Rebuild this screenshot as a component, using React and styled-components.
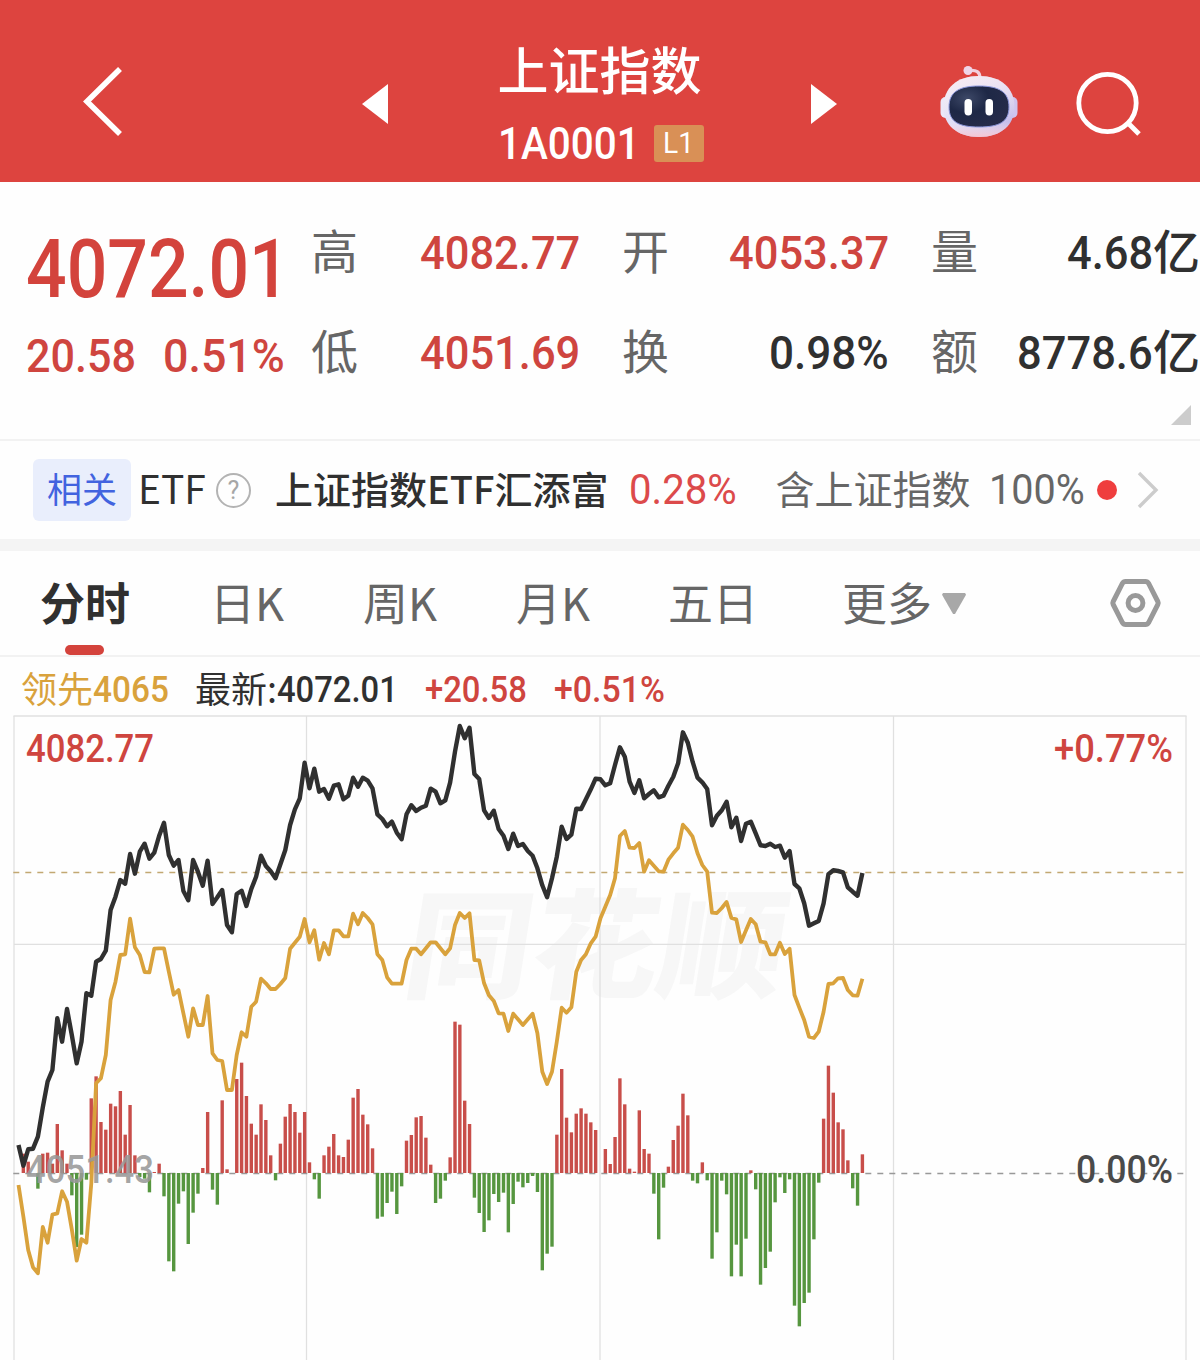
import React, { useLayoutEffect, useRef, useState } from 'react';
import styled, { createGlobalStyle } from 'styled-components';

const RED = '#cf453f';
const INK = '#303030';
const GREY = '#666666';
const GOLD = '#d9a23c';

const GlobalStyle = createGlobalStyle`
  body {
    margin: 0;
    background: #fefefe;
    overflow: hidden;
  }
  * {
    box-sizing: border-box;
  }
`;

const Page = styled.div`
  width: 1200px;
  height: 1360px;
  overflow: hidden;
  display: flex;
  flex-direction: column;
  font-family: 'Noto Sans CJK SC', sans-serif;
  color: ${INK};
`;

const Zh = styled.span`
  font-size: ${(props) => props.$size}px;
  font-weight: ${(props) => props.$weight || 400};
  color: ${(props) => props.$color || 'inherit'};
  line-height: 1;
  white-space: nowrap;
  padding-bottom: ${(props) => props.$lift || 0}px;
`;

const NumBox = styled.span`
  display: inline-block;
  flex: none;
  width: ${(props) => props.$width}px;
  font-family: Roboto, sans-serif;
  font-size: ${(props) => props.$size}px;
  font-weight: ${(props) => props.$weight || 500};
  color: ${(props) => props.$color || 'inherit'};
  line-height: 1;
  white-space: nowrap;
`;

const NumInner = styled.span`
  display: inline-block;
  transform-origin: left center;
`;

// condensed figures: squeezes the text to the given width
const Num = ({ width, size, weight, color, children }) => {
  const ref = useRef(null);
  const [scale, setScale] = useState(1);
  useLayoutEffect(() => {
    setScale(width / ref.current.offsetWidth);
  }, [width, children]);
  return (
    <NumBox $width={width} $size={size} $weight={weight} $color={color}>
      <NumInner ref={ref} style={{ transform: `scaleX(${scale})` }}>{children}</NumInner>
    </NumBox>
  );
};

/* ---------- header ---------- */

const Header = styled.header`
  height: 182px;
  flex: none;
  display: grid;
  grid-template-columns: 362px 475px 103px 78px 58px 1fr;
  background: #dd443f;
  color: #fff;
`;

const BackCell = styled.div`
  padding: 66px 0 0 82px;
`;

const TitleCell = styled.div`
  display: flex;
  justify-content: space-between;
`;

const Arrow = styled.div`
  width: 26px;
  height: 40px;
  margin-top: 84px;
  background: #fff;
  clip-path: ${(props) =>
    props.$left ? 'polygon(100% 0, 100% 100%, 0 50%)' : 'polygon(0 0, 100% 50%, 0 100%)'};
`;

const TitleText = styled.div`
  padding: 43px 0 0 2px;
`;

const CodeRow = styled.div`
  display: flex;
  align-items: center;
  gap: 14px;
  height: 46px;
  margin-top: 26px;
`;

const Badge = styled.span`
  display: flex;
  align-items: center;
  justify-content: center;
  width: 50px;
  height: 37px;
  border-radius: 3px;
  background: #d99056;
`;

const IconCell = styled.div`
  padding-top: ${(props) => props.$top}px;
  svg {
    display: block;
  }
`;

const Robot = () => (
  <svg width="78" height="74" viewBox="0 0 78 74">
    <defs>
      <linearGradient id="shell" x1="0" y1="0" x2="1" y2="1">
        <stop offset="0" stopColor="#f4f2fb" />
        <stop offset="0.5" stopColor="#dcdcf6" />
        <stop offset="1" stopColor="#b9aee6" />
      </linearGradient>
      <linearGradient id="rim" x1="0" y1="0" x2="0" y2="1">
        <stop offset="0" stopColor="#fbe9ee" stopOpacity="0.6" />
        <stop offset="0.75" stopColor="#fbe9ee" stopOpacity="0" />
        <stop offset="1" stopColor="#f6c5d2" />
      </linearGradient>
      <radialGradient id="face" cx="0.3" cy="0.3" r="0.8">
        <stop offset="0" stopColor="#3d4867" />
        <stop offset="0.45" stopColor="#1e2846" />
        <stop offset="1" stopColor="#272c4a" />
      </radialGradient>
    </defs>
    <path d="M29 5.5 Q40 4 40 13" fill="none" stroke="#f3cfdd" strokeWidth="3.2" />
    <circle cx="28" cy="5.5" r="4.5" fill="#efd5e8" />
    <rect x="0.5" y="32" width="12" height="21" rx="5" fill="#ece8f8" />
    <rect x="65.5" y="32" width="12" height="21" rx="5" fill="#cfc4ee" />
    <path d="M39 11 C61 11 74.5 23 74.5 42 C74.5 60 61 72 39 72 C17 72 3.5 60 3.5 42 C3.5 23 17 11 39 11Z" fill="url(#shell)" />
    <path d="M39 11 C61 11 74.5 23 74.5 42 C74.5 60 61 72 39 72 C17 72 3.5 60 3.5 42 C3.5 23 17 11 39 11Z" fill="url(#rim)" />
    <path
      d="M39 21 C59 21 69 27 69 42 C69 57 59 62 39 62 C19 62 9 57 9 42 C9 27 19 21 39 21Z"
      fill="url(#face)"
      stroke="#8d98dc"
      strokeWidth="1"
    />
    <rect x="24.5" y="34" width="7.5" height="16.5" rx="3.7" fill="#fff" />
    <rect x="45.5" y="34" width="7.5" height="16.5" rx="3.7" fill="#fff" />
  </svg>
);

const TopBar = () => (
  <Header>
    <BackCell>
      <svg width="42" height="72" viewBox="0 0 42 72">
        <path d="M38 3 L5 35.5 L38 68" fill="none" stroke="#fff" strokeWidth="5.6" />
      </svg>
    </BackCell>
    <TitleCell>
      <Arrow $left />
      <TitleText>
        <Zh as="div" $size={51} $weight={500}>上证指数</Zh>
        <CodeRow>
          <Num width={142} size={45}>1A0001</Num>
          <Badge>
            <Num width={31} size={30} weight={400}>L1</Num>
          </Badge>
        </CodeRow>
      </TitleText>
      <Arrow />
    </TitleCell>
    <span />
    <IconCell $top={65}>
      <Robot />
    </IconCell>
    <span />
    <IconCell $top={70}>
      <svg width="70" height="68" viewBox="0 0 70 68">
        <circle cx="31.5" cy="33" r="28.7" fill="none" stroke="#fff" strokeWidth="4.8" />
        <path d="M52 53 L63 64" stroke="#fff" strokeWidth="5" />
      </svg>
    </IconCell>
  </Header>
);

/* ---------- quote ---------- */

const QuotePanel = styled.section`
  height: 259px;
  flex: none;
  display: grid;
  grid-template-columns: 243px 269px 267px 269px;
  column-gap: 42px;
  grid-template-rows: 201px 1fr;
  padding: 20px 0 0 26px;
  border-bottom: 2px solid #f2f2f2;
`;

const PriceCol = styled.div`
  width: 259px;
`;

const BigPrice = styled.div`
  height: 134px;
  display: flex;
  align-items: center;
`;

const ChangeRow = styled.div`
  display: flex;
  justify-content: space-between;
  align-items: center;
  height: 38px;
`;

const StatCol = styled.div`
  display: grid;
  grid-template-rows: 100px 100px;
`;

const Stat = styled.div`
  display: flex;
  justify-content: space-between;
  align-items: center;
`;

const StatValue = styled.div`
  display: flex;
  align-items: center;
`;

const Corner = styled.div`
  grid-column: 4;
  justify-self: end;
  width: 20px;
  height: 20px;
  margin: 2px 9px 0 0;
  background: #cccccc;
  clip-path: polygon(100% 0, 100% 100%, 0 100%);
`;

const stats = [
  [
    { label: '高', value: '4082.77', width: 160, color: RED },
    { label: '低', value: '4051.69', width: 160, color: RED },
  ],
  [
    { label: '开', value: '4053.37', width: 160, color: RED },
    { label: '换', value: '0.98%', width: 120 },
  ],
  [
    { label: '量', value: '4.68', width: 86, unit: '亿' },
    { label: '额', value: '8778.6', width: 136, unit: '亿' },
  ],
];

const Quote = () => (
  <QuotePanel>
    <PriceCol>
      <BigPrice>
        <Num width={264} size={81} color="#d3433c">4072.01</Num>
      </BigPrice>
      <ChangeRow>
        <Num width={110} size={47} color={RED}>20.58</Num>
        <Num width={122} size={47} color={RED}>0.51%</Num>
      </ChangeRow>
    </PriceCol>
    {stats.map((col, i) => (
      <StatCol key={i}>
        {col.map((s) => (
          <Stat key={s.label}>
            <Zh $size={47} $lift={8} $color={GREY}>{s.label}</Zh>
            <StatValue>
              <Num width={s.width} size={47} color={s.color}>{s.value}</Num>
              {s.unit && <Zh $size={47} $lift={8} $weight={500}>{s.unit}</Zh>}
            </StatValue>
          </Stat>
        ))}
      </StatCol>
    ))}
    <Corner />
  </QuotePanel>
);

/* ---------- related etf ---------- */

const EtfRow = styled.section`
  height: 98px;
  flex: none;
  display: flex;
  align-items: center;
  padding-left: 33px;
`;

const Tag = styled.span`
  display: flex;
  align-items: center;
  justify-content: center;
  width: 98px;
  height: 62px;
  border-radius: 6px;
  background: #e9eefc;
  margin-right: 7px;
`;

const Help = styled.span`
  display: flex;
  align-items: center;
  justify-content: center;
  width: 35px;
  height: 35px;
  border: 2px solid #b3b3b3;
  border-radius: 50%;
  margin: 0 24px 0 10px;
  font: 400 25px Roboto, sans-serif;
  color: #a6a6a6;
`;

const Gap = styled.span`
  width: ${(props) => props.$w}px;
`;

const Dot = styled.span`
  width: 20px;
  height: 20px;
  border-radius: 50%;
  background: #ef3e3e;
  margin: 0 20px 0 12px;
`;

const Related = () => (
  <EtfRow>
    <Tag>
      <Zh $size={35} $lift={5} $color="#4263df">相关</Zh>
    </Tag>
    <Zh $size={39} $lift={5}>ETF</Zh>
    <Help>?</Help>
    <Zh $size={38} $lift={5} $weight={500}>上证指数ETF汇添富</Zh>
    <Gap $w={21} />
    <Num width={108} size={42} weight={400} color="#dc4a4b">0.28%</Num>
    <Gap $w={38} />
    <Zh $size={39} $lift={5} $color={GREY}>含上证指数</Zh>
    <Gap $w={19} />
    <Num width={96} size={42} weight={400} color={GREY}>100%</Num>
    <Dot />
    <svg width="22" height="38" viewBox="0 0 22 38">
      <path d="M2 2 L19 19 L2 36" fill="none" stroke="#cccccc" strokeWidth="3.4" />
    </svg>
  </EtfRow>
);

const Band = styled.div`
  height: 12px;
  flex: none;
  background: #f4f4f4;
`;

/* ---------- tabs ---------- */

const TabBar = styled.nav`
  height: 106px;
  flex: none;
  display: grid;
  grid-template-columns: 170px 153px 153px 152px 174px 267px 1fr;
  padding-left: 40px;
  border-bottom: 2px solid #f2f2f2;
`;

const Tab = styled.div`
  display: flex;
  flex-direction: column;
  justify-content: space-between;
  padding-top: 28px;
`;

const TabLabel = styled.div`
  display: flex;
  align-items: center;
  gap: 10px;
`;

const Underline = styled.span`
  width: 39px;
  height: 10px;
  border-radius: 5px;
  background: #d4433c;
  margin-left: 25px;
`;

const Caret = styled.span`
  width: 24px;
  height: 21px;
  margin-top: 4px;
  background: #a8a8a8;
  clip-path: polygon(4% 0, 96% 0, 100% 8%, 54% 100%, 46% 100%, 0 8%);
`;

const tabs = ['分时', '日K', '周K', '月K', '五日', '更多'];

const Tabs = () => (
  <TabBar>
    {tabs.map((name, i) => (
      <Tab key={name}>
        <TabLabel>
          <Zh $size={45} $weight={i === 0 ? 700 : 400} $color={i === 0 ? INK : GREY}>{name}</Zh>
          {name === '更多' && <Caret />}
        </TabLabel>
        {i === 0 && <Underline />}
      </Tab>
    ))}
    <IconCell $top={26}>
      <svg width="54" height="52" viewBox="0 0 54 52">
        <path
          d="M16.5 4.5 H36.5 Q38.5 4.5 39.5 6.2 L48.8 24.5 Q49.6 26 48.8 27.5 L39.5 45.8 Q38.5 47.5 36.5 47.5 H16.5 Q14.5 47.5 13.5 45.8 L4.2 27.5 Q3.4 26 4.2 24.5 L13.5 6.2 Q14.5 4.5 16.5 4.5Z"
          fill="none"
          stroke="#999999"
          strokeWidth="5"
        />
        <circle cx="26.5" cy="26" r="7.4" fill="none" stroke="#999999" strokeWidth="5" />
      </svg>
    </IconCell>
  </TabBar>
);

/* ---------- chart ---------- */

const Legend = styled.div`
  height: 53px;
  flex: none;
  display: flex;
  align-items: center;
  padding: 12px 0 0 21px;
`;

const ChartBox = styled.div`
  flex: 1;
  svg {
    display: block;
  }
`;

const SvgNum = styled.text`
  font-family: Roboto, sans-serif;
  font-size: 38px;
  font-weight: 500;
`;

const Watermark = styled.text`
  font-family: 'Noto Sans CJK SC', sans-serif;
  font-size: 118px;
  font-weight: 900;
  fill: #f7f7f7;
`;

// index price per minute, in thirds of a pixel from the top
const price = [
  1305, 1367, 1318, 1316, 1280, 1192, 1115, 1080, 925, 995, 897, 975, 1060, 995, 850, 857, 755, 747, 722, 600,
  560, 510, 521, 432, 491, 425, 401, 446, 428, 378, 338, 435, 467, 450, 543, 571, 450, 485, 527, 452,
  582, 562, 540, 645, 667, 552, 542, 588, 537, 500, 437, 468, 484, 505, 463, 420, 345, 298, 265, 158,
  235, 176, 245, 237, 266, 227, 223, 268, 257, 203, 230, 203, 212, 235, 313, 327, 349, 335, 368, 388,
  313, 286, 303, 293, 287, 236, 245, 280, 271, 218, 125, 48, 85, 53, 192, 207, 301, 324, 302, 357,
  377, 417, 371, 408, 402, 423, 437, 475, 526, 562, 505, 440, 350, 387, 374, 296, 297, 268, 238, 206,
  208, 226, 220, 165, 112, 140, 215, 249, 211, 265, 252, 241, 262, 257, 227, 200, 160, 67, 98, 155,
  203, 217, 237, 346, 317, 301, 275, 352, 323, 393, 341, 335, 370, 406, 408, 401, 411, 407, 443, 423,
  522, 535, 580, 647, 640, 633, 580, 493, 481, 483, 487, 532, 545, 557, 489,
];

const leading = [
  1425, 1520, 1620, 1672, 1690, 1551, 1598, 1514, 1510, 1444, 1475, 1558, 1652, 1587, 1598, 1420, 1120, 1105, 1035, 870,
  815, 735, 733, 626, 712, 735, 786, 787, 716, 715, 715, 785, 854, 840, 910, 980, 895, 945, 945, 858,
  1030, 1050, 1053, 1140, 1140, 1035, 967, 980, 890, 875, 806, 820, 837, 837, 822, 804, 716, 698, 680, 627,
  697, 661, 749, 699, 733, 661, 661, 679, 679, 611, 643, 609, 624, 643, 733, 750, 802, 821, 821, 821,
  750, 716, 716, 733, 715, 697, 697, 715, 733, 715, 645, 609, 624, 610, 750, 751, 820, 856, 873, 910,
  911, 963, 911, 928, 945, 928, 911, 970, 1085, 1122, 1085, 995, 893, 908, 892, 785, 750, 733, 700, 680,
  625, 590, 555, 505, 378, 363, 413, 414, 399, 485, 451, 467, 484, 485, 449, 430, 413, 344, 360, 380,
  430, 465, 485, 608, 609, 594, 576, 624, 628, 696, 661, 627, 643, 695, 697, 733, 733, 698, 732, 716,
  855, 893, 930, 980, 984, 965, 905, 822, 820, 805, 804, 840, 856, 857, 806,
];

// momentum bars, positive goes up
const bars = [
  0, 58, 34, 0, -47, 58, 61, 28, 147, 68, 28, -67, -222, -185, -20, 224, 290, 153, 130, 208,
  200, 246, 115, 204, 53, -12, -17, -58, 3, 28, -70, -265, -295, -92, -55, -213, -119, -62, 15, 183,
  -50, -95, 218, 11, 0, 282, 331, 231, 148, 115, 206, 159, 53, -22, 88, 169, 207, 183, 121, 183,
  32, -19, -77, 53, 79, 117, 53, 48, 100, 226, 252, 175, 146, 74, -137, -131, -90, -56, -123, -40,
  97, 114, 167, 171, 106, 25, -90, -77, -23, 47, 454, 445, 217, 147, -74, -120, -177, -142, -63, -87,
  -59, -178, -93, -26, -43, -30, -9, -57, -292, -242, -221, 115, 312, 166, 122, 178, 194, 178, 152, 129,
  0, 72, 27, 108, 284, 206, 13, 4, 188, 72, 58, -62, -199, -44, 19, 99, 142, 238, 173, -23,
  -31, 32, -22, -257, -178, -23, -64, -310, -215, -310, -197, 8, -49, -335, -285, -236, -88, -13, -60, -19,
  -398, -460, -390, -359, -199, -29, 163, 322, 241, 152, 131, 38, -46, -98, 56,
];

const STEP = 4.85;
const X0 = 18.5;
const ZERO = 463;

const xAt = (i) => X0 + i * STEP;
const toPoints = (list) => list.map((v, i) => `${xAt(i).toFixed(1)},${(v / 3).toFixed(1)}`).join(' ');

const Chart = () => (
  <ChartBox>
    <svg width="1200" height="650" viewBox="0 0 1200 650">
      <g transform="translate(400 279) skewX(-9)">
        <Watermark x="0" y="0" textLength="380" lengthAdjust="spacingAndGlyphs">同花顺</Watermark>
      </g>
      <g stroke="#e0e0e0" strokeWidth="1.3" fill="none">
        <path d="M13.5 6 H1186.5" strokeWidth="1.6" />
        <path d="M14 6 V650 M306.5 6 V650 M600 6 V650 M893.5 6 V650 M1186 6 V650" />
        <path d="M14 234.3 H1186" />
      </g>
      <path d="M13.3 162.5 H1186" stroke="#c2a872" strokeWidth="1.7" strokeDasharray="6 6" />
      <path d="M13.3 463.5 H1186" stroke="#999999" strokeWidth="1.7" strokeDasharray="6 6" />
      {bars.map((v, i) => (
        <rect
          key={i}
          x={xAt(i) - 1.7}
          y={v > 0 ? ZERO - v / 3 : ZERO}
          width="3.4"
          height={Math.abs(v) / 3}
          fill={v > 0 ? '#c84e4a' : '#56963f'}
        />
      ))}
      <polyline points={toPoints(leading)} fill="none" stroke={GOLD} strokeWidth="3.8" strokeLinejoin="round" />
      <polyline points={toPoints(price)} fill="none" stroke="#303030" strokeWidth="4.4" strokeLinejoin="round" />
      <SvgNum x="26" y="52" textLength="128" lengthAdjust="spacingAndGlyphs" fill={RED}>4082.77</SvgNum>
      <SvgNum x="1054" y="52" textLength="119" lengthAdjust="spacingAndGlyphs" fill={RED}>+0.77%</SvgNum>
      <SvgNum x="26" y="472.5" textLength="128" lengthAdjust="spacingAndGlyphs" fill="#999999" fillOpacity="0.9">4051.43</SvgNum>
      <SvgNum x="1076" y="472.5" textLength="97" lengthAdjust="spacingAndGlyphs" fill="#4a4a4a">0.00%</SvgNum>
    </svg>
  </ChartBox>
);

const App = () => (
  <Page>
    <GlobalStyle />
    <TopBar />
    <Quote />
    <Related />
    <Band />
    <Tabs />
    <Legend>
      <Zh $size={36} $lift={6} $color={GOLD}>领先</Zh>
      <Num width={76} size={36} color={GOLD}>4065</Num>
      <Gap $w={26} />
      <Zh $size={36} $lift={6}>最新:</Zh>
      <Num width={121} size={36}>4072.01</Num>
      <Gap $w={27} />
      <Num width={102} size={36} color={RED}>+20.58</Num>
      <Gap $w={27} />
      <Num width={111} size={36} color={RED}>+0.51%</Num>
    </Legend>
    <Chart />
  </Page>
);

export default App;
